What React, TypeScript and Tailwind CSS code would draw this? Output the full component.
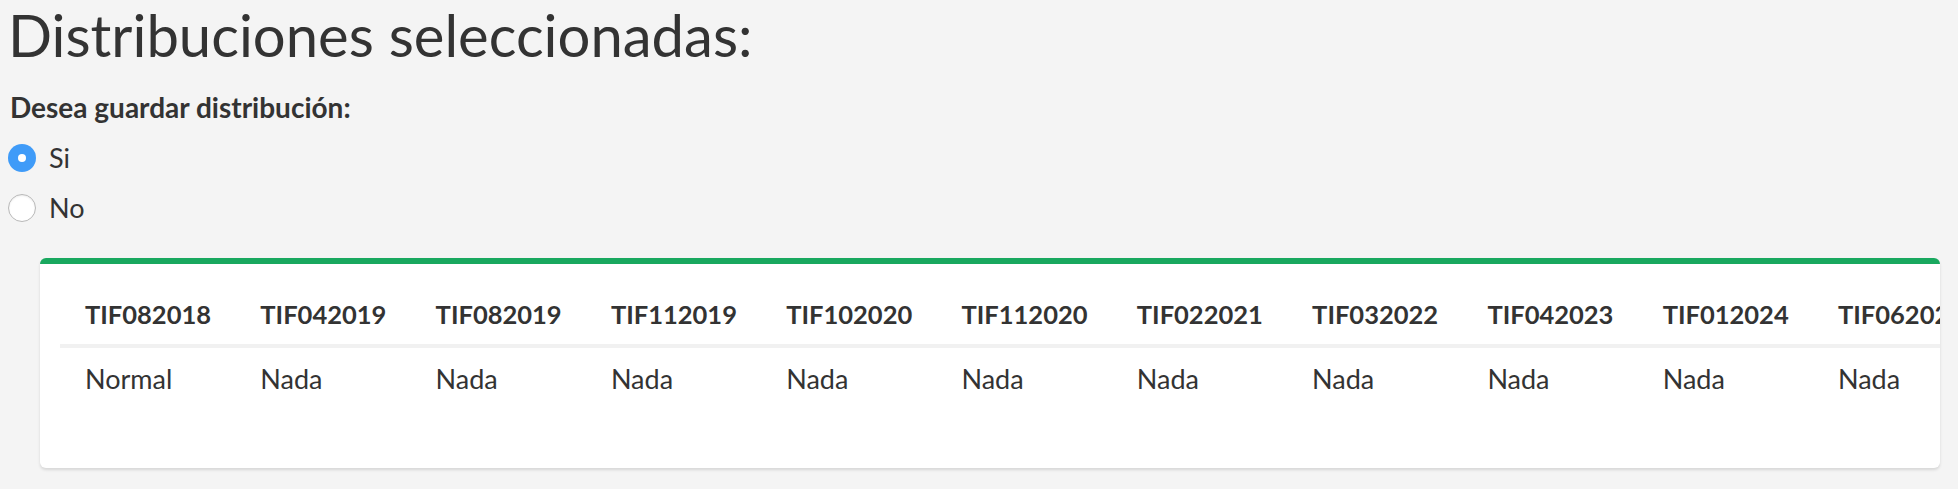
import React from 'react';

const headers = [
  'TIF082018',
  'TIF042019',
  'TIF082019',
  'TIF112019',
  'TIF102020',
  'TIF112020',
  'TIF022021',
  'TIF032022',
  'TIF042023',
  'TIF012024',
  'TIF062024',
];

const values = ['Normal', 'Nada', 'Nada', 'Nada', 'Nada', 'Nada', 'Nada', 'Nada', 'Nada', 'Nada', 'Nada'];

const App: React.FC = () => {
  return (
    <div className="min-h-screen w-full bg-[#f4f4f4] text-[#333] font-['Lato',sans-serif] overflow-hidden">
      {/* Title */}
      <h2 className="pl-[8px] text-[58px] leading-[70px] font-normal">Distribuciones seleccionadas:</h2>

      {/* Radio group */}
      <div className="mt-[17px] pl-[10px]">
        <label className="block text-[28px] leading-[40px] font-bold">Desea guardar distribución:</label>
        <div className="mt-[6px] flex flex-col">
          <div className="flex h-[50px] items-center">
            <span className="flex h-[28px] w-[28px] items-center justify-center rounded-full bg-[#3f9bf8] -ml-[2px]">
              <span className="h-[8px] w-[8px] rounded-full bg-white" />
            </span>
            <span className="ml-[13px] text-[27px]">Si</span>
          </div>
          <div className="flex h-[50px] items-center">
            <span className="h-[28px] w-[28px] rounded-full border border-[#b8b8b8] bg-white shadow-[inset_0_1px_2px_rgba(0,0,0,0.08)] -ml-[2px]" />
            <span className="ml-[13px] text-[27px]">No</span>
          </div>
        </div>
      </div>

      {/* Box */}
      <div className="mt-[25px] ml-[40px] mr-[18px] h-[210px] overflow-hidden rounded-[6px] border-t-[6px] border-[#19a85f] bg-white pl-[20px] pt-[20px] shadow-[0_2px_3px_rgba(0,0,0,0.12)]">
        <table className="border-collapse">
          <thead>
            <tr className="border-b-[4px] border-[#f1f1f1]">
              {headers.map((h) => (
                <th key={h} className="h-[62px] w-[175.3px] min-w-[175.3px] whitespace-nowrap pl-[25px] text-left text-[25.5px] font-bold">
                  {h}
                </th>
              ))}
              <th className="w-[200px] min-w-[200px]" />
            </tr>
          </thead>
          <tbody>
            <tr>
              {values.map((v, i) => (
                <td key={i} className="h-[62px] whitespace-nowrap pl-[25px] pt-[2px] text-left text-[27px]">
                  {v}
                </td>
              ))}
              <td />
            </tr>
          </tbody>
        </table>
      </div>
    </div>
  );
};

export default App;
